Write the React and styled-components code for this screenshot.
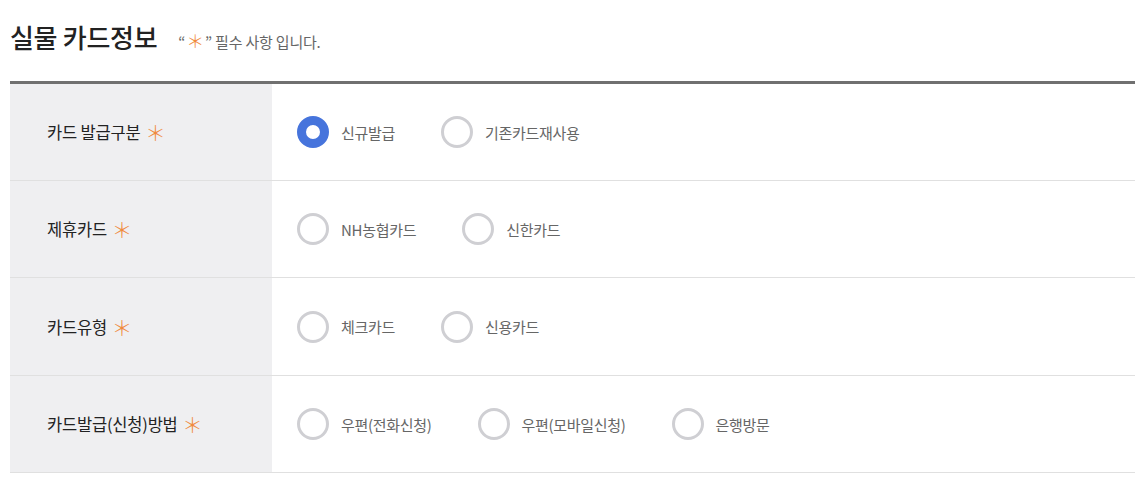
import React from 'react';
import styled, { createGlobalStyle } from 'styled-components';

const GlobalStyle = createGlobalStyle`
    body {
        margin: 0;
        background: #fff;
        font-family: "Noto Sans CJK KR", "Noto Sans", sans-serif;
    }
`;

const ROWS = [
    { label: '카드 발급구분', name: 'issue', options: ['신규발급', '기존카드재사용'], checked: 0 },
    { label: '제휴카드', name: 'partner', options: ['NH농협카드', '신한카드'] },
    { label: '카드유형', name: 'type', options: ['체크카드', '신용카드'] },
    { label: '카드발급(신청)방법', name: 'method', options: ['우편(전화신청)', '우편(모바일신청)', '은행방문'] },
];

const Wrapper = styled.div`
    padding: 0 11px 0 10px;
`;

const Header = styled.div`
    display: flex;
    align-items: baseline;
    height: 81px;
    box-sizing: border-box;
    padding-top: 18px;
`;

const Title = styled.h2`
    margin: 0;
    font-size: 26px;
    font-weight: 500;
    color: #222;
    letter-spacing: -0.3px;
`;

const Note = styled.span`
    margin-left: 21px;
    font-size: 15px;
    color: #666;
    letter-spacing: -0.2px;
`;

const Star = styled.span`
    color: #f08a3c;
    font-size: ${({ big }) => (big ? '21px' : '18px')};
    font-weight: 300;
    margin: 0 1px;
`;

const Table = styled.div`
    border-top: 3px solid #707070;
`;

const Row = styled.div`
    display: flex;
    height: ${({ tall }) => (tall ? '98px' : '97px')};
    box-sizing: border-box;
    border-bottom: 1px solid #e0e0e0;
`;

const Label = styled.div`
    display: flex;
    align-items: center;
    width: 262px;
    padding-left: 37px;
    box-sizing: border-box;
    background: #efeff1;
    font-size: 16.5px;
    color: #222;
    letter-spacing: -0.2px;
`;

const Options = styled.div`
    display: flex;
    align-items: center;
    padding-left: 25px;
    gap: 46px;
`;

const Option = styled.label`
    display: flex;
    align-items: center;
    gap: 12px;
    font-size: 15px;
    color: #666;
    letter-spacing: -0.3px;
    cursor: pointer;
`;

const Radio = styled.span`
    width: 32px;
    height: 32px;
    box-sizing: border-box;
    border-radius: 50%;
    border: ${({ checked }) => (checked ? '9px solid #4674dc' : '3px solid #cfcfd3')};
    background: #fff;
`;

export default function App() {
    return (
        <Wrapper>
            <GlobalStyle />
            <Header>
                <Title>실물 카드정보</Title>
                <Note>“<Star>＊</Star>” 필수 사항 입니다.</Note>
            </Header>
            <Table>
                {ROWS.map((row, idx) => (
                    <Row key={row.name} tall={idx === 2}>
                        <Label>
                            {row.label}&nbsp;<Star big>＊</Star>
                        </Label>
                        <Options>
                            {row.options.map((opt, i) => (
                                <Option key={opt}>
                                    <Radio checked={row.checked === i} />
                                    {opt}
                                </Option>
                            ))}
                        </Options>
                    </Row>
                ))}
            </Table>
        </Wrapper>
    );
}
